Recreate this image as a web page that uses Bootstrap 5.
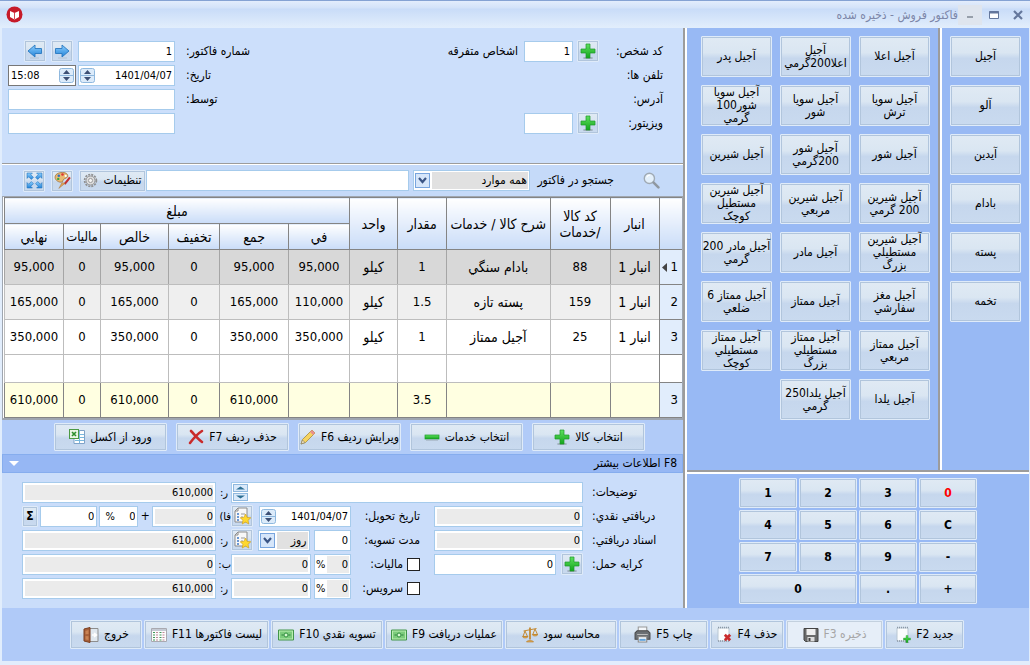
<!DOCTYPE html>
<html lang="fa" dir="rtl">
<head>
<meta charset="utf-8">
<meta name="viewport" content="width=device-width, initial-scale=1">
<title>فاکتور فروش</title>
<link href="https://cdn.jsdelivr.net/npm/bootstrap@5.3.0/dist/css/bootstrap.min.css" rel="stylesheet">
<style>
body{font-family:"DejaVu Sans Condensed","DejaVu Sans",sans-serif;font-size:12px;line-height:13px;color:#000;background:#e1edfc}
button,input,select{font:inherit;color:inherit;border-radius:0}
svg{display:block;flex:none}
.frame{min-height:100vh;padding:0 1px 4px 2px}
.titlebar{height:28px;border-top:1px solid #85a2d3;margin:0 -1px 0 -2px;padding:0 0 0 6px;background:linear-gradient(#e3edfc 0,#d3e2f9 7px,#c9dcf8 8px,#e2eefc 27px);color:#7c86a8}
.titlebar h1{font-size:12px;line-height:16px;margin:0}
.winbtn{border:0;background:none;width:24px;height:20px;padding:0;display:flex;align-items:center;justify-content:center}
.minbtn{background:#dfe5ee}
.side{width:342px;background:#98b9f4;flex:none}
.split-v{width:4px;flex:none;border-right:2px solid #fff;border-left:2px solid #9c9c9c}
.split-thin{width:4px;flex:none;border-left:2px solid #9c9c9c;background:#fff}
.split-h{height:4px;border-top:2px solid #9c9c9c;background:#fff}
.tile{border:1px solid #dfebf9;box-shadow:inset 0 0 0 1px #b1c5dc;background:linear-gradient(#e0eaf4 0,#dae6f2 40%,#c6d7ed 55%,#c9daef 100%);border-radius:1px;padding:0 2px;display:flex;align-items:center;justify-content:center;gap:5px;white-space:nowrap}
.tile:disabled{background:#e6eef8;color:#a6a6a6;box-shadow:inset 0 0 0 1px #c3d0de}
.cats .tile,.goods .tile{height:41px;width:71px;white-space:normal;line-height:13px}
.cats{display:grid;gap:8px;align-content:start;padding:8px;width:87px}
.goods{display:grid;grid-template-columns:repeat(3,71px);gap:8px;padding:8px;align-content:start}
.keypad{display:grid;grid-template-columns:repeat(4,58px);grid-auto-rows:30px;gap:2px;padding:4px 0;justify-content:center;font-weight:bold;font-size:12px}
.keypad .zero{grid-column:span 2}
.keypad .red{color:#f00}
.panel-head{background:#ccdffb;min-height:137px;padding:12px 20px 0 6px;border-bottom:1px solid #fff;box-shadow:inset 0 -1px #9c9c9c}
.person{display:grid;grid-template-columns:64px 26px 49px auto;grid-auto-rows:22px;row-gap:2px;align-items:center}
.person .wide{grid-column:1/-1}
.person .pname{padding-right:6px}
.invoice{display:grid;grid-template-columns:80px 167px;grid-auto-rows:22px;row-gap:2px;align-items:center}
.invoice label{text-align:left;padding-left:11px;white-space:nowrap}
.ctl{height:21px;border:1px solid #a6cbec;background:#fff;padding:0 2px;min-width:0;width:100%;text-align:right;font-size:11px;line-height:17px}
.ctl[readonly]{background:#ebebeb;box-shadow:inset 0 0 0 2px #fff}
.combo{height:21px;border:1px solid #a6cbec;background:#fff;display:flex;align-items:center;padding:1px;gap:2px;min-width:0;font-size:11px}
.combo input,.combo select{border:0;outline:0;background:#fff;padding:0 1px;min-width:0;width:0;flex:1 1 0;height:17px;appearance:none;text-align:right}
.combo select{background:#e1e1e1;font-size:12px}
.combo input[readonly]{background:#ebebeb}
.timebox{border-color:#777;direction:ltr}
.timebox input{text-align:left}
.sq{width:22px;height:22px;padding:0;flex:none}
.searchbar{background:#c5daf9;height:31px;padding:0 23px 0 21px}
.searchbar label{width:76px;margin:0 29px 0 8px;white-space:nowrap}
.searchbar .setup{height:22px;width:67px}
.gap6{gap:6px}
.gridbox{border:1px solid #9fa6b0;border-bottom:2px solid #9fa6b0;background:#fff;padding:0 0 0 1px}
.sales{width:100%;table-layout:fixed;border-collapse:collapse;font-size:13px;line-height:16px;text-align:center;margin:0}
.sales th,.sales td{border:1px solid #bdbdbd;padding:0;height:35px;font-weight:normal;vertical-align:middle;white-space:nowrap}
.sales thead th{border-color:#848484;background:linear-gradient(#fff,#c9dcf8);height:26px;font-size:14px}
.sales td.fa{font-size:14px}
.sales thead th.tax{font-size:13px}
.sales tbody th,.sales tfoot th{background:#e1edfc;border-color:#848484;text-align:right;padding-right:4px}
.sales .cur td{background:#d8d8d8;border-color:#bdbdbd #a5a5a5}
.sales .alt td{background:#efefef}
.sales .blank td,.sales .blank th{height:28px;background:#fff}
.sales tfoot td{background:#ffffe1;border-color:#848484}
.sales tr>.num{border-right:0}
.mark-cur{display:flex;align-items:center;gap:4px}
.actions{background:#b1cbf8;height:34px;padding:3px 38px 3px 0;gap:9px}
.actions .tile{height:28px;width:113px}
.actions .narrow{width:103px}
.more{background:#96b7f4;border:1px solid #86adee;height:19px;padding:0 5px 0 6px}
.details{background:#caddfa;padding:8px 20px 6px;display:grid;grid-template-columns:80px 1fr 83px 120px 15px 194px;grid-auto-rows:22px;row-gap:2px;align-items:center;align-content:start}
.details .lab1{text-align:left;padding-left:9px}
.details .lab2{padding-right:14px;display:flex;align-items:center;gap:4px;white-space:nowrap}
.details .frag{text-align:left;padding-left:4px;white-space:nowrap;font-size:11px}
.span3{grid-column:span 3}
.col3{grid-column:3}
.tick{appearance:none;width:13px;height:13px;border:1px solid #222;background:#fff;margin:0;flex:none}
.tick:checked{background:#3a6fc0}
.footbar{background:#b0caf8;height:53px;padding:12px 65px 0 0;gap:2px}
.footbar .tile{height:29px;padding:0 1px}
.w-16{width:16px;height:21px}
.w-39{width:39px}.w-52{width:52px}.w-57{width:57px}.w-64{width:64px}.w-68{width:68px}.w-72{width:72px}.w-74{width:74px}.w-79{width:79px}.w-89{width:89px}.w-92{width:92px}.w-97{width:97px}.w-112{width:112px}.w-117{width:117px}.w-118{width:118px}.w-125{width:125px}
.w-pct{width:37px;flex:none}
.gap3{gap:3px}.gap5{gap:5px}
</style>
</head>
<body>
<svg width="0" height="0" class="position-absolute" aria-hidden="true">
<defs><linearGradient id="gg" x1="0" y1="0" x2="0" y2="1"><stop offset="0" stop-color="#5fe05f"/><stop offset="1" stop-color="#12a51c"/></linearGradient>
<linearGradient id="bg" x1="0" y1="0" x2="0" y2="1"><stop offset="0" stop-color="#8fd0ff"/><stop offset="1" stop-color="#2182d8"/></linearGradient></defs>
<symbol id="plus" viewBox="0 0 16 16"><ellipse cx="8" cy="15" rx="5" ry="1" fill="#9aa8b4"/><path d="M6 1h4v5h5v4h-5v5H6v-5H1V6h5z" fill="url(#gg)" stroke="#1c9a2a" stroke-width=".7"/></symbol>
<symbol id="minus" viewBox="0 0 16 16"><rect x="1" y="6" width="14" height="4" fill="url(#gg)" stroke="#1c9a2a" stroke-width=".7"/><path d="M2 11h12" stroke="#9aa8b4"/></symbol>
<symbol id="right" viewBox="0 0 16 16"><path d="M1.500 5.500H8V2l7 6-7 6v-3.500H1.500z" fill="url(#bg)" stroke="#2878c0" stroke-width=".9"/><path d="M4 15h9" stroke="#b3c3d4"/></symbol>
<symbol id="left" viewBox="0 0 16 16"><path d="M14.500 5.500H8V2L1 8l7 6v-3.500h6.500z" fill="url(#bg)" stroke="#2878c0" stroke-width=".9"/><path d="M3 15h9" stroke="#b3c3d4"/></symbol>
<symbol id="spin" viewBox="0 0 15 15"><rect x=".5" y=".5" width="14" height="14" rx="2" fill="#dcebfa" stroke="#8fb8de"/><path d="M1 7.500h13" stroke="#8fb8de"/><path d="M4 6l3.500-4L11 6zM4 9l3.500 4L11 9z" fill="#3d4f74"/></symbol>
<symbol id="spinwide" viewBox="0 0 15 17"><rect x=".5" y=".5" width="14" height="7" fill="#d9e9fa" stroke="#8fb8de"/><rect x=".5" y="9.500" width="14" height="7" fill="#d9e9fa" stroke="#8fb8de"/><path d="M3 5.500l4.500-3 4.500 3zM3 11.500l4.500 3 4.500-3z" fill="#2c6f93"/></symbol>
<symbol id="drop" viewBox="0 0 15 15"><rect x=".5" y=".5" width="14" height="14" fill="#d6e6fa" stroke="#78a5de"/><path d="M4 5l3.500 4L11 5" fill="none" stroke="#3b5585" stroke-width="2.200"/></symbol>
<symbol id="lens" viewBox="0 0 16 16"><circle cx="6" cy="6" r="4.800" fill="#e4f0fb" stroke="#a0aab4" stroke-width="1.300"/><path d="M3.500 5a3 3 0 013-2" stroke="#fff" fill="none"/><path d="M10 10l4.500 4.500" stroke="#9098a0" stroke-width="2.400" stroke-linecap="round"/></symbol>
<symbol id="gear" viewBox="0 0 16 16"><circle cx="8" cy="8" r="6.300" fill="none" stroke="#909090" stroke-width="1.800" stroke-dasharray="2.200 1.100"/><circle cx="8" cy="8" r="4.800" fill="#ddd" stroke="#909090"/><circle cx="8" cy="8" r="2.200" fill="#f4f4f4" stroke="#999"/></symbol>
<symbol id="palette" viewBox="0 0 16 16"><path d="M1 5c0-3 3-4.500 7-4.500s5 2 5 3.500-3 2-4 3 0 2-2 2.500S1 8 1 5z" fill="#e8ba72" stroke="#9a6a30" stroke-width=".7"/><circle cx="4.500" cy="3.500" r="1.200" fill="#2f70c8"/><circle cx="8" cy="2.300" r="1.200" fill="#d33"/><circle cx="4" cy="6.500" r="1.100" fill="#38a840"/><circle cx="11" cy="3.700" r="1" fill="#fff"/><path d="M15 5l-5 6.500" stroke="#c22f2f" stroke-width="2"/><path d="M10.500 10.500l-6 5 3-5.500z" fill="#e0a458" stroke="#a06a2c" stroke-width=".4"/></symbol>
<symbol id="expand" viewBox="0 0 16 16"><g fill="url(#bg)" stroke="#2878c0" stroke-width=".6"><path d="M1 1h5L4.500 2.500 7 5 5 7 2.500 4.500 1 6z"/><path d="M15 1v5l-1.500-1.500L11 7 9 5l2.500-2.500L10 1z"/><path d="M1 15v-5l1.500 1.500L5 9l2 2-2.500 2.500L6 15z"/><path d="M15 15h-5l1.500-1.500L9 11l2-2 2.500 2.500L15 10z"/></g></symbol>
<symbol id="excel" viewBox="0 0 16 16"><path d="M5 1.500h10.500v13H5z" fill="#fff" stroke="#7fa3c8"/><path d="M10.500 2v12M6 5.500h9M6 8.500h9M6 11.500h9" stroke="#79b8dd"/><rect x=".5" y=".5" width="9" height="9" fill="#e9f5e5" stroke="#4c9a45"/><path d="M3 3l4 4M7 3L3 7" stroke="#2d8f2d" stroke-width="1.600"/></symbol>
<symbol id="cross" viewBox="0 0 16 16"><path d="M3 2c3 3 7 8 11 11M14 2C9 5 5 10 2 14" fill="none" stroke="#c92b2b" stroke-width="2.600" stroke-linecap="round"/></symbol>
<symbol id="pencil" viewBox="0 0 16 16"><path d="M1 15l1.500-4.500L12 1l3 3-9.500 9.500z" fill="#f6d460" stroke="#a88a3a" stroke-width=".8"/><path d="M12 1l3 3-2 2-3-3z" fill="#e98f8f"/><path d="M1 15l1.500-4 2.500 2.500z" fill="#f5e3c0" stroke="#776" stroke-width=".6"/></symbol>
<symbol id="note" viewBox="0 0 18 18"><path d="M5 1h9v14H2V4z" fill="#f8f8f8" stroke="#8c8c8c"/><path d="M5 1v3H2" fill="none" stroke="#8c8c8c"/><path d="M4 7h2M4 10h2M4 13h2" stroke="#3c78c8" stroke-width="1.400"/><path d="M8 7h4M8 10h2" stroke="#999"/><path d="M12.500 7l1.600 3.400 3.700.4-2.800 2.500.8 3.700-3.300-1.900L9.200 17l.8-3.700-2.800-2.500 3.700-.4z" fill="#ffd82e" stroke="#d2a41c" stroke-width=".7"/></symbol>
<symbol id="sheet" viewBox="0 0 16 16"><path d="M2 2h11v13H2z" fill="#fafcfd" stroke="#b8c6d2"/><path d="M2 1.500h11M2 15h11" stroke="#8a98a6" stroke-width="1.400" stroke-dasharray="1 1"/></symbol>
<symbol id="bold-x" viewBox="0 0 10 10"><path d="M2 2l6 6M8 2L2 8" stroke="#c92b2b" stroke-width="3"/></symbol>
<symbol id="floppy" viewBox="0 0 16 16"><path d="M1 1.500h14v13H2.500L1 13z" fill="#6a6a6a" stroke="#444"/><path d="M3.500 2h9v6h-9z" fill="#eee"/><path d="M4.500 10h7v4.500h-7z" fill="#ddd"/><path d="M5.500 11h2v3h-2z" fill="#444"/></symbol>
<symbol id="printer" viewBox="0 0 16 16"><path d="M4 1h8v5H4z" fill="#f4f7fa" stroke="#999"/><path d="M1 6.500l2-2h10l2 2v6H1z" fill="#6b6f73" stroke="#4a4a4a"/><path d="M3 8h10" stroke="#bbb"/><path d="M4 10h8v5H4z" fill="#fff" stroke="#888"/><path d="M5 12h6v2H5z" fill="#63a4dc"/></symbol>
<symbol id="scale" viewBox="0 0 16 16"><g fill="none" stroke="#c48a34" stroke-width="1"><path d="M8 1v12" stroke-width="1.800"/><path d="M1.500 4.500L14.500 2M3 4.500L1 10h4.500zM13 2.500L10.800 8h4.700z"/></g><path d="M.5 10h5.500c-.5 2-5 2-5.500 0zM10.300 8h5.500c-.5 2-5 2-5.500 0zM4.500 15.500c0-2 7-2 7 0z" fill="#e0a850" stroke="#b57e2c" stroke-width=".6"/></symbol>
<symbol id="money" viewBox="0 0 16 12"><path d="M.5 1h15v10H.5z" fill="#b9eeb0" stroke="#42954a"/><path d="M2 2.500h12v7H2z" fill="#7ccc7c"/><circle cx="8" cy="6" r="2" fill="#d8f8d2" stroke="#2f8f3e"/><path d="M3.500 6h2M10.500 6h2" stroke="#2f7f3e"/></symbol>
<symbol id="list" viewBox="0 0 16 14"><path d="M.5.500h15v13H.5z" fill="#fcfcfc" stroke="#a9a9b0"/><path d="M1 2h14" stroke="#c4cad4" stroke-width="2"/><path d="M3 4v9M9.500 4v9" stroke="#3c9a5a" stroke-width="2" stroke-dasharray="1 1.500"/><path d="M6 4v9M12.500 4v9" stroke="#c0889a" stroke-width="2" stroke-dasharray="1 1.500"/></symbol>
<symbol id="door" viewBox="0 0 16 16"><path d="M6 1.500h9v13H6z" fill="#dfe7ee" stroke="#8d8d8d"/><path d="M1 2l6-1.500v15L1 14z" fill="#a7603a" stroke="#7a3f20"/><path d="M2.500 4l3-1v4l-3 .3zM2.500 9l3 .2v3.800l-3-.5z" fill="#c98355"/><path d="M9 8h4M11 6l2.500 2L11 10" stroke="#fff" stroke-width="1.500" fill="none"/></symbol>
</svg>

<div class="frame d-flex flex-column">
<header class="titlebar d-flex align-items-center">
<button class="winbtn" aria-label="بستن"><svg width="10" height="10"><path d="M1 1l8 8M9 1L1 9" stroke="#64779c" stroke-width="2.200"/></svg></button>
<button class="winbtn" aria-label="بازگردانی"><svg width="10" height="8"><path d="M.5.500h9v7h-9z" fill="#fff" stroke="#64779c"/><path d="M0 1.500h10" stroke="#64779c" stroke-width="2"/></svg></button>
<button class="winbtn minbtn" aria-label="کوچک کردن"><svg width="8" height="8"><path d="M1 6h6" stroke="#7f8793" stroke-width="1.500"/></svg></button>
<h1>فاکتور فروش - ذخیره شده</h1>
<svg class="me-auto" width="17" height="17" viewBox="0 0 17 17"><circle cx="8.500" cy="8.500" r="8" fill="#c61a29"/><path d="M4 5l4.500 2L13 5v6l-4.500 2.500L4 11z" fill="#fff"/><path d="M8.500 7v6" stroke="#c61a29" stroke-width=".8"/></svg>
</header>

<main class="d-flex flex-grow-1">
<aside class="side d-flex flex-column">
<div class="d-flex flex-grow-1">
<nav class="cats" aria-label="گروه ها">
<button class="tile">آجیل</button><button class="tile">آلو</button><button class="tile">آیدین</button><button class="tile">بادام</button><button class="tile">پسته</button><button class="tile">تخمه</button>
</nav>
<div class="split-thin"></div>
<section class="goods" aria-label="کالاها">
<button class="tile">آجیل اعلا</button><button class="tile">آجیل اعلا200گرمي</button><button class="tile">آجیل پدر</button>
<button class="tile">آجیل سویا ترش</button><button class="tile">آجیل سویا شور</button><button class="tile">آجیل سویا شور100 گرمي</button>
<button class="tile">آجیل شور</button><button class="tile">آجیل شور 200گرمي</button><button class="tile">آجیل شیرین</button>
<button class="tile">آجیل شیرین 200 گرمي</button><button class="tile">آجیل شیرین مربعي</button><button class="tile">آجیل شیرین مستطیل<br>کوچک</button>
<button class="tile">آجیل شیرین مستطیلي<br>بزرگ</button><button class="tile">آجیل مادر</button><button class="tile px-0"><span class="text-nowrap">آجیل مادر 200<br>گرمي</span></button>
<button class="tile">آجیل مغز سفارشي</button><button class="tile">آجیل ممتاز</button><button class="tile">آجیل ممتاز 6 ضلعي</button>
<button class="tile">آجیل ممتاز مربعي</button><button class="tile">آجیل ممتاز مستطیلي<br>بزرگ</button><button class="tile">آجیل ممتاز مستطیلي<br>کوچک</button>
<button class="tile">آجیل یلدا</button><button class="tile">آجیل یلدا250 گرمي</button>
</section>
</div>
<div class="split-h"></div>
<section class="keypad" dir="ltr" aria-label="صفحه کلید">
<button class="tile">1</button><button class="tile">2</button><button class="tile">3</button><button class="tile red">0</button>
<button class="tile">4</button><button class="tile">5</button><button class="tile">6</button><button class="tile">C</button>
<button class="tile">7</button><button class="tile">8</button><button class="tile">9</button><button class="tile">-</button>
<button class="tile zero">0</button><button class="tile">.</button><button class="tile">+</button>
</section>
</aside>
<div class="split-v"></div>

<div class="flex-grow-1 d-flex flex-column overflow-hidden">
<section class="panel-head d-flex justify-content-between align-items-start">
<div class="person">
<label for="pcode">کد شخص:</label><button class="tile sq" aria-label="افزودن شخص"><svg width="16" height="16"><use href="#plus"/></svg></button><input id="pcode" class="ctl" value="1"><span class="pname">اشخاص متفرقه</span>
<span class="wide">تلفن ها:</span>
<span class="wide">آدرس:</span>
<label for="visitor">ویزیتور:</label><button class="tile sq" aria-label="افزودن ویزیتور"><svg width="16" height="16"><use href="#plus"/></svg></button><input id="visitor" class="ctl">
</div>
<div class="invoice">
<label for="inv">شماره فاکتور:</label>
<div class="d-flex align-items-center gap5"><input id="inv" class="ctl w-97" value="1"><button class="tile sq" aria-label="بعدی"><svg width="16" height="16"><use href="#right"/></svg></button><button class="tile sq" aria-label="قبلی"><svg width="16" height="16"><use href="#left"/></svg></button></div>
<label for="idate">تاریخ:</label>
<div class="d-flex justify-content-between"><div class="combo w-97"><input id="idate" value="1401/04/07"><svg width="15" height="15"><use href="#spin"/></svg></div><div class="combo timebox w-68"><input value="15:08" aria-label="ساعت"><svg width="15" height="15"><use href="#spin"/></svg></div></div>
<label for="by">توسط:</label><input id="by" class="ctl">
<span></span><input class="ctl" aria-label="توضیح">
</div>
</section>

<section class="searchbar d-flex align-items-center">
<svg width="17" height="17"><use href="#lens"/></svg>
<label for="scope">جستجو در فاکتور</label>
<div class="combo w-117"><select id="scope"><option>همه موارد</option></select><svg width="15" height="15"><use href="#drop"/></svg></div>
<div class="d-flex flex-fill pe-1"><input class="ctl" aria-label="متن جستجو"></div>
<div class="d-flex gap6">
<button class="tile setup">تنظیمات<svg width="15" height="15"><use href="#gear"/></svg></button>
<button class="tile sq" aria-label="رنگ"><svg width="17" height="17"><use href="#palette"/></svg></button>
<button class="tile sq" aria-label="تمام صفحه"><svg width="17" height="17"><use href="#expand"/></svg></button>
</div>
</section>

<div class="gridbox">
<table class="sales">
<colgroup><col style="width:23px"><col style="width:49px"><col style="width:60px"><col><col style="width:49px"><col style="width:48px"><col style="width:61px"><col style="width:69px"><col style="width:51px"><col style="width:68px"><col style="width:37px"><col style="width:59px"></colgroup>
<thead>
<tr><th rowspan="2" class="num"></th><th rowspan="2">انبار</th><th rowspan="2">کد کالا<br>/خدمات</th><th rowspan="2">شرح کالا / خدمات</th><th rowspan="2">مقدار</th><th rowspan="2">واحد</th><th colspan="6">مبلغ</th></tr>
<tr><th>في</th><th>جمع</th><th>تخفیف</th><th>خالص</th><th class="tax">مالیات</th><th>نهايي</th></tr>
</thead>
<tbody>
<tr class="cur"><th class="num"><span class="mark-cur">1<svg width="5" height="9"><path d="M5 0v9L0 4.500z" fill="#444"/></svg></span></th><td class="fa">انبار 1</td><td>88</td><td class="fa">بادام سنگي</td><td>1</td><td class="fa">کیلو</td><td>95,000</td><td>95,000</td><td>0</td><td>95,000</td><td>0</td><td>95,000</td></tr>
<tr class="alt"><th class="num">2</th><td class="fa">انبار 1</td><td>159</td><td class="fa">پسته تازه</td><td>1.5</td><td class="fa">کیلو</td><td>110,000</td><td>165,000</td><td>0</td><td>165,000</td><td>0</td><td>165,000</td></tr>
<tr><th class="num">3</th><td class="fa">انبار 1</td><td>25</td><td class="fa">آجیل ممتاز</td><td>1</td><td class="fa">کیلو</td><td>350,000</td><td>350,000</td><td>0</td><td>350,000</td><td>0</td><td>350,000</td></tr>
<tr class="blank"><th class="num"></th><td></td><td></td><td></td><td></td><td></td><td></td><td></td><td></td><td></td><td></td><td></td></tr>
</tbody>
<tfoot><tr><th class="num">3</th><td></td><td></td><td></td><td>3.5</td><td></td><td></td><td>610,000</td><td>0</td><td>610,000</td><td>0</td><td>610,000</td></tr></tfoot>
</table>
</div>

<div class="actions d-flex">
<button class="tile">انتخاب کالا<svg width="16" height="16"><use href="#plus"/></svg></button>
<button class="tile">انتخاب خدمات<svg width="16" height="16"><use href="#minus"/></svg></button>
<button class="tile narrow">ویرایش ردیف F6<svg width="16" height="16"><use href="#pencil"/></svg></button>
<button class="tile">حذف ردیف F7<svg width="16" height="16"><use href="#cross"/></svg></button>
<button class="tile">ورود از اکسل<svg width="16" height="16"><use href="#excel"/></svg></button>
</div>

<div class="more d-flex align-items-center justify-content-between"><span>F8 اطلاعات بیشتر</span><svg width="10" height="5"><path d="M0 0h10L5 5z" fill="#fff"/></svg></div>

<section class="details flex-grow-1">
<label class="lab1" for="desc">توضیحات:</label>
<div class="combo span3"><input id="desc"><svg width="15" height="17"><use href="#spinwide"/></svg></div>
<label class="frag" for="t1">ر:</label><input id="t1" class="ctl" readonly value="610,000">

<label class="lab1" for="cash">دریافتي نقدي:</label><input id="cash" class="ctl" readonly value="0">
<label class="lab2" for="ddate">تاریخ تحویل:</label>
<div class="d-flex align-items-center justify-content-between"><div class="combo w-92"><input id="ddate" value="1401/04/07"><svg width="15" height="15"><use href="#spin"/></svg></div><button class="tile sq" aria-label="یادداشت تحویل"><svg width="18" height="18"><use href="#note"/></svg></button></div>
<label class="frag" for="t2">فا)</label>
<div class="d-flex align-items-center justify-content-between"><input id="t2" class="ctl w-64" readonly value="0"><span>+</span><div class="combo w-39"><input value="0" aria-label="درصد"><span class="px-1">%</span></div><input class="ctl w-57" value="0" aria-label="مبلغ"><button class="tile fw-bold w-16" aria-label="جمع">Σ</button></div>

<label class="lab1" for="docs">اسناد دریافتي:</label><input id="docs" class="ctl" readonly value="0">
<label class="lab2" for="due">مدت تسویه:</label>
<div class="d-flex align-items-center justify-content-between"><input id="due" class="ctl w-pct" value="0"><div class="combo w-52"><select aria-label="واحد مدت"><option>روز</option></select><svg width="15" height="15"><use href="#drop"/></svg></div><button class="tile sq" aria-label="یادداشت تسویه"><svg width="18" height="18"><use href="#note"/></svg></button></div>
<label class="frag" for="t3">ر:</label><input id="t3" class="ctl" readonly value="610,000">

<label class="lab1" for="freight">کرایه حمل:</label>
<div class="d-flex align-items-center gap5"><button class="tile sq" aria-label="افزودن کرایه"><svg width="16" height="16"><use href="#plus"/></svg></button><input id="freight" class="ctl" value="0"></div>
<div class="lab2"><input class="tick" type="checkbox" id="tax"><label for="tax">مالیات:</label></div>
<div class="d-flex gap3"><div class="combo w-pct"><input value="0" readonly aria-label="درصد مالیات"><span>%</span></div><input class="ctl" readonly value="0" aria-label="مبلغ مالیات"></div>
<label class="frag" for="t4">ب:</label><input id="t4" class="ctl" readonly value="0">

<div class="lab2 col3"><input class="tick" type="checkbox" id="srv"><label for="srv">سرویس:</label></div>
<div class="d-flex gap3"><div class="combo w-pct"><input value="0" readonly aria-label="درصد سرویس"><span>%</span></div><input class="ctl" readonly value="0" aria-label="مبلغ سرویس"></div>
<label class="frag" for="t5">ر:</label><input id="t5" class="ctl" readonly value="610,000">
</section>
</div>
</main>

<footer class="footbar d-flex">
<button class="tile w-79">جدید F2<svg width="16" height="18" viewBox="0 0 16 18"><use href="#sheet" width="16" height="16"/><use href="#plus" x="8" y="9" width="8" height="8"/></svg></button>
<button class="tile w-97" disabled>ذخیره F3<svg width="16" height="16"><use href="#floppy"/></svg></button>
<button class="tile w-74">حذف F4<svg width="16" height="18" viewBox="0 0 16 18"><use href="#sheet" width="16" height="16"/><use href="#bold-x" x="7" y="7" width="9" height="9"/></svg></button>
<button class="tile w-89">چاپ F5<svg width="17" height="17"><use href="#printer"/></svg></button>
<button class="tile w-112">محاسبه سود<svg width="16" height="17"><use href="#scale"/></svg></button>
<button class="tile w-118">عملیات دریافت F9<svg width="16" height="12"><use href="#money"/></svg></button>
<button class="tile w-112">تسویه نقدي F10<svg width="16" height="12"><use href="#money"/></svg></button>
<button class="tile w-125">لیست فاکتورها F11<svg width="16" height="14"><use href="#list"/></svg></button>
<button class="tile w-72">خروج<svg width="16" height="16"><use href="#door"/></svg></button>
</footer>
</div>
<script src="https://cdn.jsdelivr.net/npm/bootstrap@5.3.0/dist/js/bootstrap.bundle.min.js"></script>
</body>
</html>
